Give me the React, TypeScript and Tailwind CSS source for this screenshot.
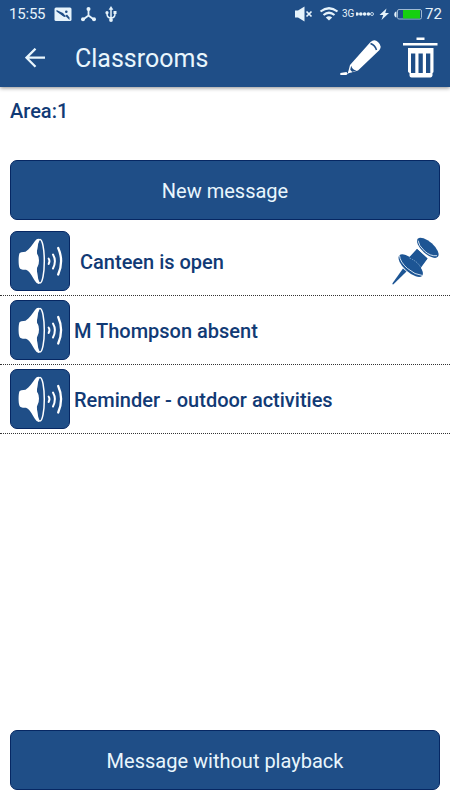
import type { ReactNode } from "react";
import { clsx } from "clsx";

type Message = { id: number; title: string; pinned?: boolean };

const messages: Message[] = [
  { id: 1, title: "Canteen is open", pinned: true },
  { id: 2, title: "M Thompson absent" },
  { id: 3, title: "Reminder - outdoor activities" },
];

function StatusBar() {
  return (
    <div className="flex h-7 items-center pl-[9px] pr-2 text-[#e6f3fb]">
      <span className="w-[45px] text-[15px] leading-7 tracking-[-0.2px]">15:55</span>
      <svg width="64" height="18" viewBox="0 0 64 18" fill="none">
        <rect x="0.5" y="2.500" width="17" height="13.500" rx="1.5" fill="currentColor" />
        <path d="M2.500 5.500 9.500 9.500l1.500 1.500 2-1.500 2.500 3v2.500l-4-4-1 1z" fill="#1f4e87" />
        <path d="M2.500 5v1.500L9.500 11.500h2.500L9 8z" fill="#1f4e87" />
        <circle cx="12.300" cy="6.700" r="1.300" fill="#1f4e87" />
        <path d="M34.500 4v6.500l-6 4.500M34.500 10.500l6 4.500" stroke="currentColor" strokeWidth="1.800" />
        <circle cx="34.500" cy="4" r="2" fill="currentColor" />
        <circle cx="29" cy="14.300" r="2" fill="currentColor" />
        <circle cx="40" cy="14.300" r="2" fill="currentColor" />
        <path d="M57 3v12M57 13c-3 0-4-1.500-4-4.500M57 13c3 0 4-1.500 4-4.500" stroke="currentColor" strokeWidth="1.500" />
        <path d="m57 1 2.400 3.700h-4.800z" fill="currentColor" />
        <circle cx="57" cy="15" r="1.900" fill="currentColor" />
        <circle cx="53" cy="7.700" r="1.600" fill="currentColor" />
        <rect x="59.500" y="6" width="3" height="3" fill="currentColor" />
      </svg>
      <div className="ml-auto flex items-center">
        <svg width="46" height="18" viewBox="0 0 46 18" fill="none">
          <path d="M1 5.500h3l6.500-4v15L4 12.500H1z" fill="currentColor" />
          <path d="m12.500 6.500 5 5m0-5-5 5" stroke="currentColor" strokeWidth="1.700" />
          <path d="M26.500 6.500q8.500-6.500 17 0M29.500 10q5.500-4.500 11 0" stroke="currentColor" strokeWidth="2.200" />
          <path d="M31.800 12.500q3.200-2.600 6.400 0L35 15.500z" fill="currentColor" />
        </svg>
        <span className="ml-[2px] w-[14px] text-[10px] leading-none tracking-[-0.200px]">3G</span>
        <svg width="69" height="18" viewBox="1 0 69 18" fill="none">
          <circle cx="2" cy="9" r="1.800" fill="currentColor" />
          <circle cx="5.800" cy="9" r="1.800" fill="currentColor" />
          <circle cx="9.600" cy="9" r="1.800" fill="currentColor" />
          <circle cx="13.400" cy="9" r="1.800" fill="currentColor" />
          <circle cx="17" cy="9" r="1.500" stroke="currentColor" strokeWidth="0.800" />
          <path d="m31.500 3.500-7 6.500h3.700l-1.700 5 7.500-7h-3.700z" fill="currentColor" />
          <rect x="42.500" y="4.500" width="24" height="9.500" rx="1.500" stroke="#9fb9d3" />
          <path d="M41.500 6.500c-3 0-3 6 0 6z" fill="currentColor" />
          <rect x="48" y="5" width="17" height="8.500" fill="#16cf10" />
        </svg>
        <span className="w-[17px] text-[15px] leading-7">72</span>
      </div>
    </div>
  );
}

function BackIcon() {
  return (
    <svg width="20" height="20" viewBox="0 0 20 20" fill="none" stroke="#e9f6fd" strokeWidth="2.300">
      <path d="M20 9.700H2M10.500 .700l-9 9 9 9" />
    </svg>
  );
}

function PencilIcon() {
  return (
    <svg width="42" height="38" viewBox="0 0 42 38">
      <path d="M7.800 34.500 10 26 30.500 3Q34.500-.500 38 3q4.500 4 1.500 8L18 31.500z" fill="#fff" />
      <path d="M30.500 4.500q4.500 1.500 6 6.500" stroke="#1f4e87" strokeWidth="1.500" fill="none" />
      <path d="M11.200 26.700q1 4 5.300 4.800l-7 2.300z" fill="#1f4e87" />
      <path d="M8 34.300 9.500 30l2.800 3z" fill="#fff" />
      <path d="M.300 34 6.500 33l1.300 1.800-1.500 1.200H.300z" fill="#fff" />
    </svg>
  );
}

function TrashIcon() {
  return (
    <svg width="36" height="42" viewBox="0 0 36 42">
      <path d="M14.500 .500h8v2.500h-8zM1 6h34.500v2.500H1z" fill="#fff" />
      <path d="M6 11h25.500v23.500q0 1-1 1.500v2.500q-.500 2-2 2h-19q-2 0-2-2V36q-1-.500-1.500-1.500z" fill="#fff" />
      <path d="M9 16.500h4.300v19.500H9zM16.500 16.500h4.300v19.500h-4.300zM24 16.500h4.300v19.500H24z" fill="#1f4e87" />
    </svg>
  );
}

function SpeakerIcon() {
  return (
    <svg width="58" height="58" viewBox="1 1 58 58" fill="none">
      <ellipse cx="30" cy="30.300" rx="4.300" ry="21.800" fill="#1f4e87" stroke="#fff" strokeWidth="1.500" />
      <path
        d="M9.500 22.300Q10.300 20.700 15.500 20.700C19.500 18.500 22.500 13.500 25 10Q27 7.300 29.300 8C28 11 27.400 15 27 20Q26.700 23 27.800 24Q29 26 29 29.500T27.700 35.500Q26.500 37 27 40.500C27.400 46 28 50 29.500 52.800Q27 53.500 25 50C22 45 20 40.500 16 38.700Q10.500 39 9.500 36.700C8.300 34 8.300 25 9.500 22.300Z"
        fill="#fff"
      />
      <path d="M38.600 27.500q1.800 2.500 0 5.500" stroke="#fff" strokeWidth="1.900" strokeLinecap="round" />
      <path d="M43 23.500q3.800 6.500 0 14" stroke="#fff" strokeWidth="2" strokeLinecap="round" />
      <path d="M48.200 17q5.800 13 0 26.500" stroke="#fff" strokeWidth="2.300" strokeLinecap="round" />
    </svg>
  );
}

function PinIcon() {
  return (
    <svg width="48" height="48" viewBox="0 0 48 48" fill="#1d5594">
      <path d="m11 31.500 3.500 3L1.500 47.300q-1.500.500-1-1z" />
      <path d="M25 12 35.500 21.500 28 32 16 21.500z" />
      <ellipse cx="18.700" cy="28.700" rx="15.300" ry="6.500" transform="rotate(42 18.700 28.700)" />
      <path d="m25 12 10.500 9.500-7 8.500Q23 23.500 17.500 21z" />
      <ellipse cx="35.800" cy="10.800" rx="13.500" ry="6" transform="rotate(42 35.800 10.800)" />
      <path d="M7.500 18.500Q8 25 15.500 31.500T30.500 38.500M26 3.500q.500 5 6.500 10.500T45 18.700" fill="none" stroke="#e3eef8" strokeWidth="0.900" />
      <path d="M17.500 21q8 3.500 11 9" fill="none" stroke="#8cb2d7" strokeWidth="0.800" strokeDasharray="1.500 1" />
    </svg>
  );
}

function ActionButton({ children }: { children: ReactNode }) {
  return (
    <button className="mx-2.5 h-[60px] shrink-0 rounded-[7px] border border-[#062763] bg-[#1f4e87] pt-px text-[20px] text-[#e9f6fd]">
      {children}
    </button>
  );
}

function MessageRow({ message }: { message: Message }) {
  return (
    <li className="flex h-[69px] items-center border-b border-dotted border-[#333]">
      <button className="ml-2.5 h-[60px] w-[60px] shrink-0 rounded-[7px] border border-[#062763] bg-[#1f4e87]">
        <SpeakerIcon />
      </button>
      <span
        className={clsx(
          "pt-0.5 text-[20px] font-medium text-[#113a75]",
          message.pinned ? "ml-2.5" : "ml-1",
        )}
      >
        {message.title}
      </span>
      {message.pinned ? (
        <span className="ml-auto mr-2.5">
          <PinIcon />
        </span>
      ) : null}
    </li>
  );
}

export default function App() {
  return (
    <div className="flex h-[800px] w-[450px] flex-col overflow-hidden bg-white font-['Roboto',sans-serif]">
      <header className="h-[87px] shrink-0 bg-[#1f4e87] shadow-[0_1px_4px_rgba(0,0,0,0.45)]">
        <StatusBar />
        <div className="flex h-[59px] items-center pl-[25px] pr-3">
          <BackIcon />
          <h1 className="ml-[30px] pt-0.5 text-[25px] text-[#e9f6fd]">Classrooms</h1>
          <div className="ml-auto flex items-center gap-5">
            <PencilIcon />
            <TrashIcon />
          </div>
        </div>
      </header>

      <p className="mt-2.5 ml-2.5 h-[63px] text-[20px] leading-7 font-medium text-[#113a75]">Area:1</p>
      <ActionButton>New message</ActionButton>
      <ul className="mt-[7px]">
        {messages.map((message) => (
          <MessageRow key={message.id} message={message} />
        ))}
      </ul>
      <div className="mt-auto mb-2.5 flex flex-col">
        <ActionButton>Message without playback</ActionButton>
      </div>
    </div>
  );
}
